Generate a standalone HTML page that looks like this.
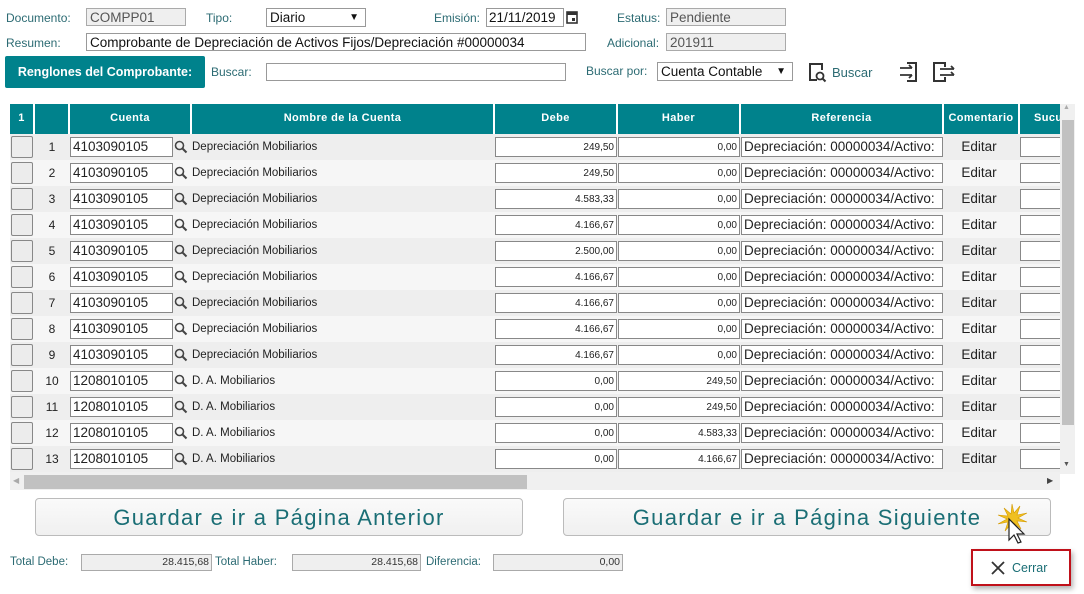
<!DOCTYPE html>
<html><head><meta charset="utf-8"><style>
*{box-sizing:border-box;margin:0;padding:0}
body{width:1084px;height:594px;background:#fff;font-family:"Liberation Sans",sans-serif;position:relative;overflow:hidden;color:#222}
.a{position:absolute}
.lbl{font-size:12px;color:#2c6b73}
.inp{position:absolute;border:1px solid #999;background:#fff;font-size:13.5px;padding-left:3px;line-height:17px;white-space:nowrap;overflow:hidden;color:#111}
.ro{background:#efefef;color:#555;border-color:#aaa}
.th{position:absolute;top:104px;height:30px;background:#00828c;color:#fff;font-weight:bold;font-size:11px;text-align:center;line-height:28px;border-right:2px solid #fff;letter-spacing:.4px}
.row{position:absolute;left:10px;width:1050px;height:26px;overflow:hidden}
.row.o{background:#eeeeee}.row.e{background:#f6f6f6}
.cb{position:absolute;left:1px;top:2px;width:22px;height:22px;border:1px solid #888;border-radius:2px;background:#ececec}
.n{position:absolute;left:30px;width:24px;text-align:center;top:6px;font-size:12px}
.ri{position:absolute;top:3px;height:20px;border:1px solid #888;background:#fff;font-size:13.5px;line-height:18px;padding:0 2px;white-space:nowrap;overflow:hidden}
.r{text-align:right;font-size:10px}
.nm{position:absolute;left:182px;top:7px;font-size:11.5px}
.ed{position:absolute;left:934px;width:70px;text-align:center;top:5px;font-size:13.5px}
.mg{position:absolute;left:164px;top:6px}
.btn{position:absolute;top:498px;height:38px;border:1px solid #bbb;border-radius:4px;background:linear-gradient(#fafafa,#f0f0f0);color:#1a6e75;font-size:22px;text-align:center;line-height:38px;letter-spacing:1.3px}
</style></head><body>
<div class="a lbl" style="left:6px;top:11px">Documento:</div>
<div class="inp ro" style="left:86px;top:8px;width:100px;height:18px">COMPP01</div>
<div class="a lbl" style="left:206px;top:11px">Tipo:</div>
<div class="inp" style="left:266px;top:8px;width:100px;height:19px">Diario<span style="position:absolute;right:6px;font-size:10px">▼</span></div>
<div class="a lbl" style="left:434px;top:11px">Emisión:</div>
<div class="inp" style="left:486px;top:8px;width:78px;height:19px;padding-left:2px">21/11/2019</div>
<svg class="a" style="left:566px;top:10px" width="12" height="14" viewBox="0 0 12 14"><rect x="1" y="2" width="10" height="11" fill="none" stroke="#333" stroke-width="1.6"/><rect x="1" y="2" width="10" height="3" fill="#333"/><rect x="6" y="8" width="3" height="3" fill="#333"/></svg>
<div class="a lbl" style="left:617px;top:11px">Estatus:</div>
<div class="inp ro" style="left:666px;top:8px;width:120px;height:18px">Pendiente</div>
<div class="a lbl" style="left:6px;top:36px">Resumen:</div>
<div class="inp" style="left:86px;top:33px;width:500px;height:18px">Comprobante de Depreciación de Activos Fijos/Depreciación #00000034</div>
<div class="a lbl" style="left:607px;top:36px">Adicional:</div>
<div class="inp ro" style="left:666px;top:33px;width:120px;height:18px">201911</div>
<div class="a" style="left:5px;top:56px;width:200px;height:32px;background:#00828c;border-radius:2px;color:#fff;font-weight:bold;font-size:12.5px;line-height:32px;text-align:center">Renglones del Comprobante:</div>
<div class="a lbl" style="left:211px;top:65px">Buscar:</div>
<div class="inp" style="left:266px;top:63px;width:300px;height:18px"></div>
<div class="a lbl" style="left:586px;top:64px">Buscar por:</div>
<div class="inp" style="left:657px;top:62px;width:136px;height:19px">Cuenta Contable<span style="position:absolute;right:6px;font-size:10px">▼</span></div>
<svg class="a" style="left:808px;top:62px" width="20" height="22" viewBox="0 0 20 22"><path d="M9 18H2V2h12v6" fill="none" stroke="#333" stroke-width="2"/><circle cx="12" cy="14" r="3.5" fill="none" stroke="#333" stroke-width="1.8"/><path d="M14.5 16.5l3 3" stroke="#333" stroke-width="2"/></svg>
<div class="a" style="left:832px;top:65px;font-size:13px;color:#2c6b73">Buscar</div>
<svg class="a" style="left:899px;top:61px" width="20" height="22" viewBox="0 0 20 22"><path d="M8 2h9v18H8" fill="none" stroke="#333" stroke-width="2"/><path d="M1 7h12M10 4l3 3M1 14h12M10 17l3-3" stroke="#333" stroke-width="1.8" fill="none"/></svg>
<svg class="a" style="left:932px;top:61px" width="24" height="22" viewBox="0 0 24 22"><path d="M13 6V2H2v18h11v-4" fill="none" stroke="#333" stroke-width="2"/><path d="M8 8h14M19 5l3 3M8 14h14M19 11l3 3" stroke="#333" stroke-width="1.8" fill="none"/></svg>

<div class="th" style="left:10px;width:25px">1</div>
<div class="th" style="left:35px;width:35px"></div>
<div class="th" style="left:70px;width:122px">Cuenta</div>
<div class="th" style="left:192px;width:303px">Nombre de la Cuenta</div>
<div class="th" style="left:495px;width:123px">Debe</div>
<div class="th" style="left:618px;width:123px">Haber</div>
<div class="th" style="left:741px;width:203px">Referencia</div>
<div class="th" style="left:944px;width:76px">Comentario</div>
<div class="th" style="left:1020px;width:40px;border:0;text-align:left;padding-left:14px;overflow:hidden">Sucu</div>

<div class="row o" style="top:134px"><div class="cb"></div><div class="n">1</div><div class="ri" style="left:60px;width:103px">4103090105</div><svg class="mg" width="14" height="14"><circle cx="5.5" cy="5.5" r="4" fill="none" stroke="#444" stroke-width="1.6"/><path d="M8.5 8.5l4 4" stroke="#444" stroke-width="2"/></svg><div class="nm">Depreciación Mobiliarios</div><div class="ri r" style="left:485px;width:122px;padding-top:1px">249,50</div><div class="ri r" style="left:608px;width:122px;padding-top:1px">0,00</div><div class="ri" style="left:731px;width:202px">Depreciación: 00000034/Activo:</div><div class="ed">Editar</div><div class="ri" style="left:1010px;width:60px"></div></div>
<div class="row e" style="top:160px"><div class="cb"></div><div class="n">2</div><div class="ri" style="left:60px;width:103px">4103090105</div><svg class="mg" width="14" height="14"><circle cx="5.5" cy="5.5" r="4" fill="none" stroke="#444" stroke-width="1.6"/><path d="M8.5 8.5l4 4" stroke="#444" stroke-width="2"/></svg><div class="nm">Depreciación Mobiliarios</div><div class="ri r" style="left:485px;width:122px;padding-top:1px">249,50</div><div class="ri r" style="left:608px;width:122px;padding-top:1px">0,00</div><div class="ri" style="left:731px;width:202px">Depreciación: 00000034/Activo:</div><div class="ed">Editar</div><div class="ri" style="left:1010px;width:60px"></div></div>
<div class="row o" style="top:186px"><div class="cb"></div><div class="n">3</div><div class="ri" style="left:60px;width:103px">4103090105</div><svg class="mg" width="14" height="14"><circle cx="5.5" cy="5.5" r="4" fill="none" stroke="#444" stroke-width="1.6"/><path d="M8.5 8.5l4 4" stroke="#444" stroke-width="2"/></svg><div class="nm">Depreciación Mobiliarios</div><div class="ri r" style="left:485px;width:122px;padding-top:1px">4.583,33</div><div class="ri r" style="left:608px;width:122px;padding-top:1px">0,00</div><div class="ri" style="left:731px;width:202px">Depreciación: 00000034/Activo:</div><div class="ed">Editar</div><div class="ri" style="left:1010px;width:60px"></div></div>
<div class="row e" style="top:212px"><div class="cb"></div><div class="n">4</div><div class="ri" style="left:60px;width:103px">4103090105</div><svg class="mg" width="14" height="14"><circle cx="5.5" cy="5.5" r="4" fill="none" stroke="#444" stroke-width="1.6"/><path d="M8.5 8.5l4 4" stroke="#444" stroke-width="2"/></svg><div class="nm">Depreciación Mobiliarios</div><div class="ri r" style="left:485px;width:122px;padding-top:1px">4.166,67</div><div class="ri r" style="left:608px;width:122px;padding-top:1px">0,00</div><div class="ri" style="left:731px;width:202px">Depreciación: 00000034/Activo:</div><div class="ed">Editar</div><div class="ri" style="left:1010px;width:60px"></div></div>
<div class="row o" style="top:238px"><div class="cb"></div><div class="n">5</div><div class="ri" style="left:60px;width:103px">4103090105</div><svg class="mg" width="14" height="14"><circle cx="5.5" cy="5.5" r="4" fill="none" stroke="#444" stroke-width="1.6"/><path d="M8.5 8.5l4 4" stroke="#444" stroke-width="2"/></svg><div class="nm">Depreciación Mobiliarios</div><div class="ri r" style="left:485px;width:122px;padding-top:1px">2.500,00</div><div class="ri r" style="left:608px;width:122px;padding-top:1px">0,00</div><div class="ri" style="left:731px;width:202px">Depreciación: 00000034/Activo:</div><div class="ed">Editar</div><div class="ri" style="left:1010px;width:60px"></div></div>
<div class="row e" style="top:264px"><div class="cb"></div><div class="n">6</div><div class="ri" style="left:60px;width:103px">4103090105</div><svg class="mg" width="14" height="14"><circle cx="5.5" cy="5.5" r="4" fill="none" stroke="#444" stroke-width="1.6"/><path d="M8.5 8.5l4 4" stroke="#444" stroke-width="2"/></svg><div class="nm">Depreciación Mobiliarios</div><div class="ri r" style="left:485px;width:122px;padding-top:1px">4.166,67</div><div class="ri r" style="left:608px;width:122px;padding-top:1px">0,00</div><div class="ri" style="left:731px;width:202px">Depreciación: 00000034/Activo:</div><div class="ed">Editar</div><div class="ri" style="left:1010px;width:60px"></div></div>
<div class="row o" style="top:290px"><div class="cb"></div><div class="n">7</div><div class="ri" style="left:60px;width:103px">4103090105</div><svg class="mg" width="14" height="14"><circle cx="5.5" cy="5.5" r="4" fill="none" stroke="#444" stroke-width="1.6"/><path d="M8.5 8.5l4 4" stroke="#444" stroke-width="2"/></svg><div class="nm">Depreciación Mobiliarios</div><div class="ri r" style="left:485px;width:122px;padding-top:1px">4.166,67</div><div class="ri r" style="left:608px;width:122px;padding-top:1px">0,00</div><div class="ri" style="left:731px;width:202px">Depreciación: 00000034/Activo:</div><div class="ed">Editar</div><div class="ri" style="left:1010px;width:60px"></div></div>
<div class="row e" style="top:316px"><div class="cb"></div><div class="n">8</div><div class="ri" style="left:60px;width:103px">4103090105</div><svg class="mg" width="14" height="14"><circle cx="5.5" cy="5.5" r="4" fill="none" stroke="#444" stroke-width="1.6"/><path d="M8.5 8.5l4 4" stroke="#444" stroke-width="2"/></svg><div class="nm">Depreciación Mobiliarios</div><div class="ri r" style="left:485px;width:122px;padding-top:1px">4.166,67</div><div class="ri r" style="left:608px;width:122px;padding-top:1px">0,00</div><div class="ri" style="left:731px;width:202px">Depreciación: 00000034/Activo:</div><div class="ed">Editar</div><div class="ri" style="left:1010px;width:60px"></div></div>
<div class="row o" style="top:342px"><div class="cb"></div><div class="n">9</div><div class="ri" style="left:60px;width:103px">4103090105</div><svg class="mg" width="14" height="14"><circle cx="5.5" cy="5.5" r="4" fill="none" stroke="#444" stroke-width="1.6"/><path d="M8.5 8.5l4 4" stroke="#444" stroke-width="2"/></svg><div class="nm">Depreciación Mobiliarios</div><div class="ri r" style="left:485px;width:122px;padding-top:1px">4.166,67</div><div class="ri r" style="left:608px;width:122px;padding-top:1px">0,00</div><div class="ri" style="left:731px;width:202px">Depreciación: 00000034/Activo:</div><div class="ed">Editar</div><div class="ri" style="left:1010px;width:60px"></div></div>
<div class="row e" style="top:368px"><div class="cb"></div><div class="n">10</div><div class="ri" style="left:60px;width:103px">1208010105</div><svg class="mg" width="14" height="14"><circle cx="5.5" cy="5.5" r="4" fill="none" stroke="#444" stroke-width="1.6"/><path d="M8.5 8.5l4 4" stroke="#444" stroke-width="2"/></svg><div class="nm">D. A. Mobiliarios</div><div class="ri r" style="left:485px;width:122px;padding-top:1px">0,00</div><div class="ri r" style="left:608px;width:122px;padding-top:1px">249,50</div><div class="ri" style="left:731px;width:202px">Depreciación: 00000034/Activo:</div><div class="ed">Editar</div><div class="ri" style="left:1010px;width:60px"></div></div>
<div class="row o" style="top:394px"><div class="cb"></div><div class="n">11</div><div class="ri" style="left:60px;width:103px">1208010105</div><svg class="mg" width="14" height="14"><circle cx="5.5" cy="5.5" r="4" fill="none" stroke="#444" stroke-width="1.6"/><path d="M8.5 8.5l4 4" stroke="#444" stroke-width="2"/></svg><div class="nm">D. A. Mobiliarios</div><div class="ri r" style="left:485px;width:122px;padding-top:1px">0,00</div><div class="ri r" style="left:608px;width:122px;padding-top:1px">249,50</div><div class="ri" style="left:731px;width:202px">Depreciación: 00000034/Activo:</div><div class="ed">Editar</div><div class="ri" style="left:1010px;width:60px"></div></div>
<div class="row e" style="top:420px"><div class="cb"></div><div class="n">12</div><div class="ri" style="left:60px;width:103px">1208010105</div><svg class="mg" width="14" height="14"><circle cx="5.5" cy="5.5" r="4" fill="none" stroke="#444" stroke-width="1.6"/><path d="M8.5 8.5l4 4" stroke="#444" stroke-width="2"/></svg><div class="nm">D. A. Mobiliarios</div><div class="ri r" style="left:485px;width:122px;padding-top:1px">0,00</div><div class="ri r" style="left:608px;width:122px;padding-top:1px">4.583,33</div><div class="ri" style="left:731px;width:202px">Depreciación: 00000034/Activo:</div><div class="ed">Editar</div><div class="ri" style="left:1010px;width:60px"></div></div>
<div class="row o" style="top:446px"><div class="cb"></div><div class="n">13</div><div class="ri" style="left:60px;width:103px">1208010105</div><svg class="mg" width="14" height="14"><circle cx="5.5" cy="5.5" r="4" fill="none" stroke="#444" stroke-width="1.6"/><path d="M8.5 8.5l4 4" stroke="#444" stroke-width="2"/></svg><div class="nm">D. A. Mobiliarios</div><div class="ri r" style="left:485px;width:122px;padding-top:1px">0,00</div><div class="ri r" style="left:608px;width:122px;padding-top:1px">4.166,67</div><div class="ri" style="left:731px;width:202px">Depreciación: 00000034/Activo:</div><div class="ed">Editar</div><div class="ri" style="left:1010px;width:60px"></div></div>
<div class="a" style="left:10px;top:472px;width:1050px;height:2px;background:#f0f0f0"></div>

<div class="a" style="left:1060px;top:104px;width:15px;height:370px;background:#f0f0f0"></div>
<div class="a" style="left:1062px;top:120px;width:12px;height:305px;background:#c1c1c1"></div>
<div class="a" style="left:1063px;top:104px;font-size:7px;color:#aaa">▲</div>
<div class="a" style="left:1063px;top:461px;font-size:7px;color:#555">▼</div>
<div class="a" style="left:10px;top:474px;width:1050px;height:16px;background:#f0f0f0"></div>
<div class="a" style="left:24px;top:475px;width:503px;height:14px;background:#c1c1c1"></div>
<div class="a" style="left:13px;top:476px;font-size:8px;color:#aaa">◀</div>
<div class="a" style="left:1047px;top:476px;font-size:8px;color:#444">▶</div>

<div class="btn" style="left:35px;width:488px">Guardar e ir a Página Anterior</div>
<div class="btn" style="left:563px;width:488px">Guardar e ir a Página Siguiente</div>
<svg class="a" style="left:994px;top:500px" width="40" height="48" viewBox="0 0 40 48"><path d="M18 4l2 9 6-7-3 9 10-2-9 5 9 4-10-1 4 8-7-6-1 10-2-9-6 7 3-9-10 2 9-5-9-4 10 1-4-8 7 6z" fill="#f0c020" stroke="#d49a00" stroke-width=".6"/><path d="M15 19v21l5-5 4 8 3-1-4-8h7z" fill="#fff" stroke="#222" stroke-width="1.2"/></svg>

<div class="a" style="left:10px;top:556px;font-size:11.5px;color:#2c6b73">Total Debe:</div>
<div class="inp ro r" style="left:81px;top:554px;width:131px;height:17px;text-align:right;padding-right:2px;font-size:10.5px;line-height:15px;color:#333">28.415,68</div>
<div class="a" style="left:215px;top:556px;font-size:11.5px;color:#2c6b73">Total Haber:</div>
<div class="inp ro r" style="left:292px;top:554px;width:129px;height:17px;text-align:right;padding-right:2px;font-size:10.5px;line-height:15px;color:#333">28.415,68</div>
<div class="a" style="left:426px;top:556px;font-size:11.5px;color:#2c6b73">Diferencia:</div>
<div class="inp ro r" style="left:493px;top:554px;width:130px;height:17px;text-align:right;padding-right:2px;font-size:10.5px;line-height:15px;color:#333">0,00</div>

<div class="a" style="left:971px;top:549px;width:100px;height:37px;border:2px solid #c0111a;box-shadow:2px 3px 5px rgba(0,0,0,.3);background:#fff"></div>
<svg class="a" style="left:990px;top:560px" width="16" height="16" viewBox="0 0 16 16"><path d="M2 2l12 12M14 2L2 14" stroke="#333" stroke-width="1.8"/></svg>
<div class="a" style="left:1012px;top:561px;font-size:12.5px;color:#1a6e75">Cerrar</div>
</body></html>
